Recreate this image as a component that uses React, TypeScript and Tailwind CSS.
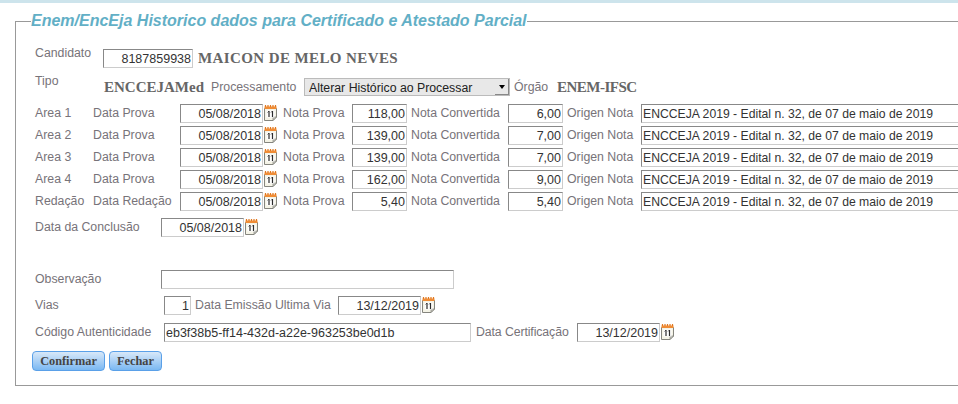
const sans = "font-['Liberation_Sans',Arial,sans-serif]";
const serif = "font-['Liberation_Serif','Times_New_Roman',serif]";

const areas = [
  { area: "Area 1", dataLabel: "Data Prova", nota: "118,00", conv: "6,00" },
  { area: "Area 2", dataLabel: "Data Prova", nota: "139,00", conv: "7,00" },
  { area: "Area 3", dataLabel: "Data Prova", nota: "139,00", conv: "7,00" },
  { area: "Area 4", dataLabel: "Data Prova", nota: "162,00", conv: "9,00" },
  { area: "Redação", dataLabel: "Data Redação", nota: "5,40", conv: "5,40" },
];

function CalendarIcon() {
  return (
    <svg width="14" height="18" viewBox="0 0 14 18" className="shrink-0 -translate-y-[1px]">
      <path d="M0.5 4.5h12v8.500l-3.500 3.500h-8.500z" fill="#f4f3e6" stroke="#85857e" />
      <path d="M9 16.500v-3.500h3.500z" fill="#c4c4bc" stroke="#85857e" strokeWidth="0.7" />
      <rect x="0.500" y="2.500" width="12" height="2.500" fill="#f08c35" />
      <path d="M1.500 1v2M4 1v2M6.500 1v2M9 1v2M11.500 1v2" stroke="#e2781f" strokeWidth="1.200" />
      <rect x="2.500" y="6.500" width="8" height="7" fill="#fff" />
      <path d="M5 7v6M8.500 7v6" stroke="#2b2b2b" strokeWidth="1.200" />
      <path d="M3.600 8.400l1.300-1.300M7.100 8.400l1.300-1.300" stroke="#2b2b2b" strokeWidth="0.900" />
    </svg>
  );
}

function Field({ value, className }: { value: string; className: string }) {
  return (
    <input
      readOnly
      value={value}
      className={`h-[19px] shrink-0 border border-t-[#888] border-r-[#ccc] border-b-[#ccc] border-l-[#888] bg-white px-[1px] text-[#333] outline-none ${sans} ${className}`}
    />
  );
}

function Label({ children, className = "" }: { children: string; className?: string }) {
  return <span className={`shrink-0 text-[12.3px] whitespace-nowrap text-[#777379] ${className}`}>{children}</span>;
}

function DateField({ value }: { value: string }) {
  return (
    <div className="flex shrink-0 items-center gap-[1px]">
      <Field value={value} className="w-[83px] text-right text-[12.5px]" />
      <CalendarIcon />
    </div>
  );
}

export default function App() {
  return (
    <div className={`h-[404px] w-[958px] overflow-hidden bg-white ${sans}`}>
      <div className="h-[3px] bg-[#cde4ec]" />
      <fieldset className="mt-[9px] ml-[15px] h-[374px] w-[1100px] border border-[#999] pt-[13px] pl-[19px]">
        <legend className="-ml-[4px] text-[16px] leading-[18px] font-bold text-[#62afc6] italic">
          Enem/EncEja Historico dados para Certificado e Atestado Parcial
        </legend>

        <div className="mt-[6px] flex h-[19px] items-center">
          <Label className="w-[68px] -translate-y-[5px]">Candidato</Label>
          <Field value="8187859938" className="w-[90px] text-right text-[12.5px]" />
          <span className={`ml-[5px] text-[15px] font-bold tracking-[0.4px] text-[#666] ${serif}`}>MAICON DE MELO NEVES</span>
        </div>

        <div className="mt-[9px] flex h-[20px] items-center">
          <Label className="w-[69px] -translate-y-[6px]">Tipo</Label>
          <span className={`w-[107px] text-[15px] font-bold text-[#666] ${serif}`}>ENCCEJAMed</span>
          <Label className="w-[93px]">Processamento</Label>
          <div className="relative h-[18px] w-[206px]">
            <select className={`block h-[18px] w-full appearance-none border border-[#bbb] bg-[#e8e8e8] pl-[4px] text-[12.3px] text-[#222] ${sans}`}>
              <option>Alterar Histórico ao Processar</option>
            </select>
            <span className="absolute top-[1px] right-[1px] flex h-[16px] w-[14px] items-center justify-center border-r border-b border-r-[#888] border-b-[#888] bg-[#e8e8e8]">
              <span className="h-0 w-0 border-x-[3px] border-t-[4px] border-x-transparent border-t-black" />
            </span>
          </div>
          <Label className="ml-[4px] w-[43px]">Órgão</Label>
          <span className={`text-[15px] font-bold tracking-[-0.5px] text-[#666] ${serif}`}>ENEM-IFSC</span>
        </div>

        <div className="mt-[7px] flex flex-col gap-[3px]">
          {areas.map((row) => (
            <div key={row.area} className="flex h-[19px] items-center">
              <Label className="w-[58px]">{row.area}</Label>
              <Label className="w-[87px]">{row.dataLabel}</Label>
              <DateField value="05/08/2018" />
              <Label className="ml-[5px] w-[69px]">Nota Prova</Label>
              <Field value={row.nota} className="w-[55px] text-right text-[12.5px]" />
              <Label className="ml-[4px] w-[97px]">Nota Convertida</Label>
              <Field value={row.conv} className="w-[55px] text-right text-[12.5px]" />
              <Label className="ml-[4px] w-[74px]">Origen Nota</Label>
              <Field value="ENCCEJA 2019 - Edital n. 32, de 07 de maio de 2019" className="w-[400px] text-[12.2px]" />
            </div>
          ))}
        </div>

        <div className="mt-[7px] flex h-[19px] items-center">
          <Label className="w-[126px]">Data da Conclusão</Label>
          <DateField value="05/08/2018" />
        </div>

        <div className="mt-[33px] flex h-[19px] items-center">
          <Label className="w-[126px]">Observação</Label>
          <Field value="" className="w-[293px] text-[12.5px]" />
        </div>

        <div className="mt-[7px] flex h-[19px] items-center">
          <Label className="w-[129px]">Vias</Label>
          <Field value="1" className="w-[27px] text-right text-[12.5px]" />
          <Label className="ml-[4px] w-[143px]">Data Emissão Ultima Via</Label>
          <DateField value="13/12/2019" />
        </div>

        <div className="mt-[8px] flex h-[19px] items-center">
          <Label className="w-[129px]">Código Autenticidade</Label>
          <Field value="eb3f38b5-ff14-432d-a22e-963253be0d1b" className="w-[307px] text-[12.5px]" />
          <Label className="ml-[5px] w-[101px] tracking-[-0.1px]">Data Certificação</Label>
          <DateField value="13/12/2019" />
        </div>

        <div className={`mt-[9px] -ml-[3px] flex gap-[4px] ${serif}`}>
          <button className="h-[20px] w-[73px] rounded-[4px] border border-[#5aa0e8] bg-gradient-to-b from-[#d8e8f8] to-[#7ab8f2] text-[12.3px] font-bold text-[#444]">
            Confirmar
          </button>
          <button className="h-[20px] w-[53px] rounded-[4px] border border-[#5aa0e8] bg-gradient-to-b from-[#d8e8f8] to-[#7ab8f2] text-[12.3px] font-bold text-[#444]">
            Fechar
          </button>
        </div>
      </fieldset>
    </div>
  );
}
